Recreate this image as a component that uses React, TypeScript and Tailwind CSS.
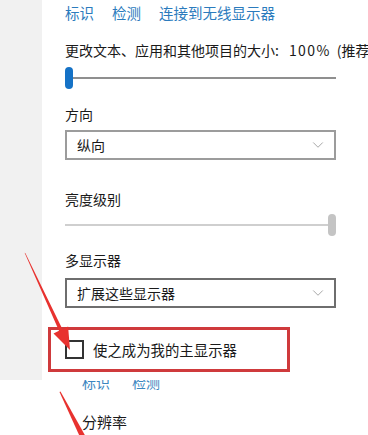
import { ChevronDown } from 'lucide-react';

const font = { fontFamily: '"Noto Sans CJK SC", "Noto Sans", sans-serif' };

function Dropdown({ value, dark }: { value: string; dark?: boolean }) {
  return (
    <div
      className={`flex h-[30px] w-[271px] items-center justify-between border-2 pl-[10px] pr-[7px] text-[14px] text-[#1a1a1a] ${
        dark ? 'border-[#6e6e6e]' : 'border-[#9c9c9c]'
      }`}
    >
      <span>{value}</span>
      <ChevronDown className="h-[18px] w-[18px] text-[#8a8a8a]" strokeWidth={1} />
    </div>
  );
}

export default function App() {
  return (
    <div
      className="relative h-[435px] w-[368px] overflow-hidden bg-white whitespace-nowrap"
      style={font}
    >
      {/* Top settings panel */}
      <div className="flex h-[380px]">
        <div className="w-[42px] flex-shrink-0 bg-[#f1f1f1]" />
        <div className="flex-1 overflow-hidden pl-[23px] pt-[3px] text-[#1a1a1a]">
          <div className="flex h-[20px] items-center gap-[18px] text-[14.5px] leading-[20px] text-[#2b7bbd]">
            <span>标识</span>
            <span>检测</span>
            <span>连接到无线显示器</span>
          </div>

          <p className="mt-[17px] h-[20px] text-[14px] leading-[20px]">
            更改文本、应用和其他项目的大小:
            <span className="ml-[10px] tracking-[1.4px]">100%</span>
            <span className="ml-[6px]">(推荐)</span>
          </p>

          {/* scale slider */}
          <div className="mt-[7px] flex h-[22px] w-[271px] items-center">
            <div className="h-[22px] w-[8px] rounded-full bg-[#1572c6]" />
            <div className="h-[1.5px] flex-1 bg-[#8f8f8f]" />
          </div>

          <p className="mt-[15px] h-[20px] text-[14px] leading-[20px]">方向</p>
          <div className="mt-[6px]">
            <Dropdown value="纵向" />
          </div>

          <p className="mt-[29px] h-[20px] text-[14px] leading-[20px]">亮度级别</p>

          {/* brightness slider */}
          <div className="mt-[5px] flex h-[22px] w-[271px] items-center">
            <div className="h-[2px] flex-1 bg-[#cfcfcf]" />
            <div className="h-[22px] w-[8px] rounded-full bg-[#c4c4c4]" />
          </div>

          <p className="mt-[14px] h-[20px] text-[14px] leading-[20px]">多显示器</p>
          <div className="mt-[8px]">
            <Dropdown value="扩展这些显示器" dark />
          </div>

          {/* highlighted checkbox */}
          <div className="-ml-[17px] mt-[19px] flex h-[45px] w-[242px] items-center gap-[9px] border-[3px] border-[#cf3a3c] pl-[14px]">
            <div className="h-[19px] w-[19px] border-2 border-[#333333]" />
            <span className="text-[14.4px] text-[#1a1a1a]">使之成为我的主显示器</span>
          </div>
        </div>
      </div>

      {/* Second screenshot below */}
      <div className="h-[55px] overflow-hidden pl-[82px]">
        <div className="-mt-[6px] flex h-[16px] items-end gap-[22px] text-[14px] leading-[16px] text-[#3a86c0]">
          <span>标识</span>
          <span>检测</span>
        </div>
        <p className="mt-[22px] text-[15px] leading-[20px] text-[#1a1a1a]">分辨率</p>
      </div>

      {/* Red annotation arrows */}
      <svg className="pointer-events-none absolute left-0 top-0" width="368" height="435">
        <polygon
          points="24.6,252.8 25.4,253.2 62.6,329.5 68.1,326.6 70,350 53.5,333.4 59,330.7"
          fill="#e8322f"
        />
        <polygon points="59.5,392 60.5,391.6 91,446 85,448" fill="#e8322f" />
      </svg>
    </div>
  );
}
